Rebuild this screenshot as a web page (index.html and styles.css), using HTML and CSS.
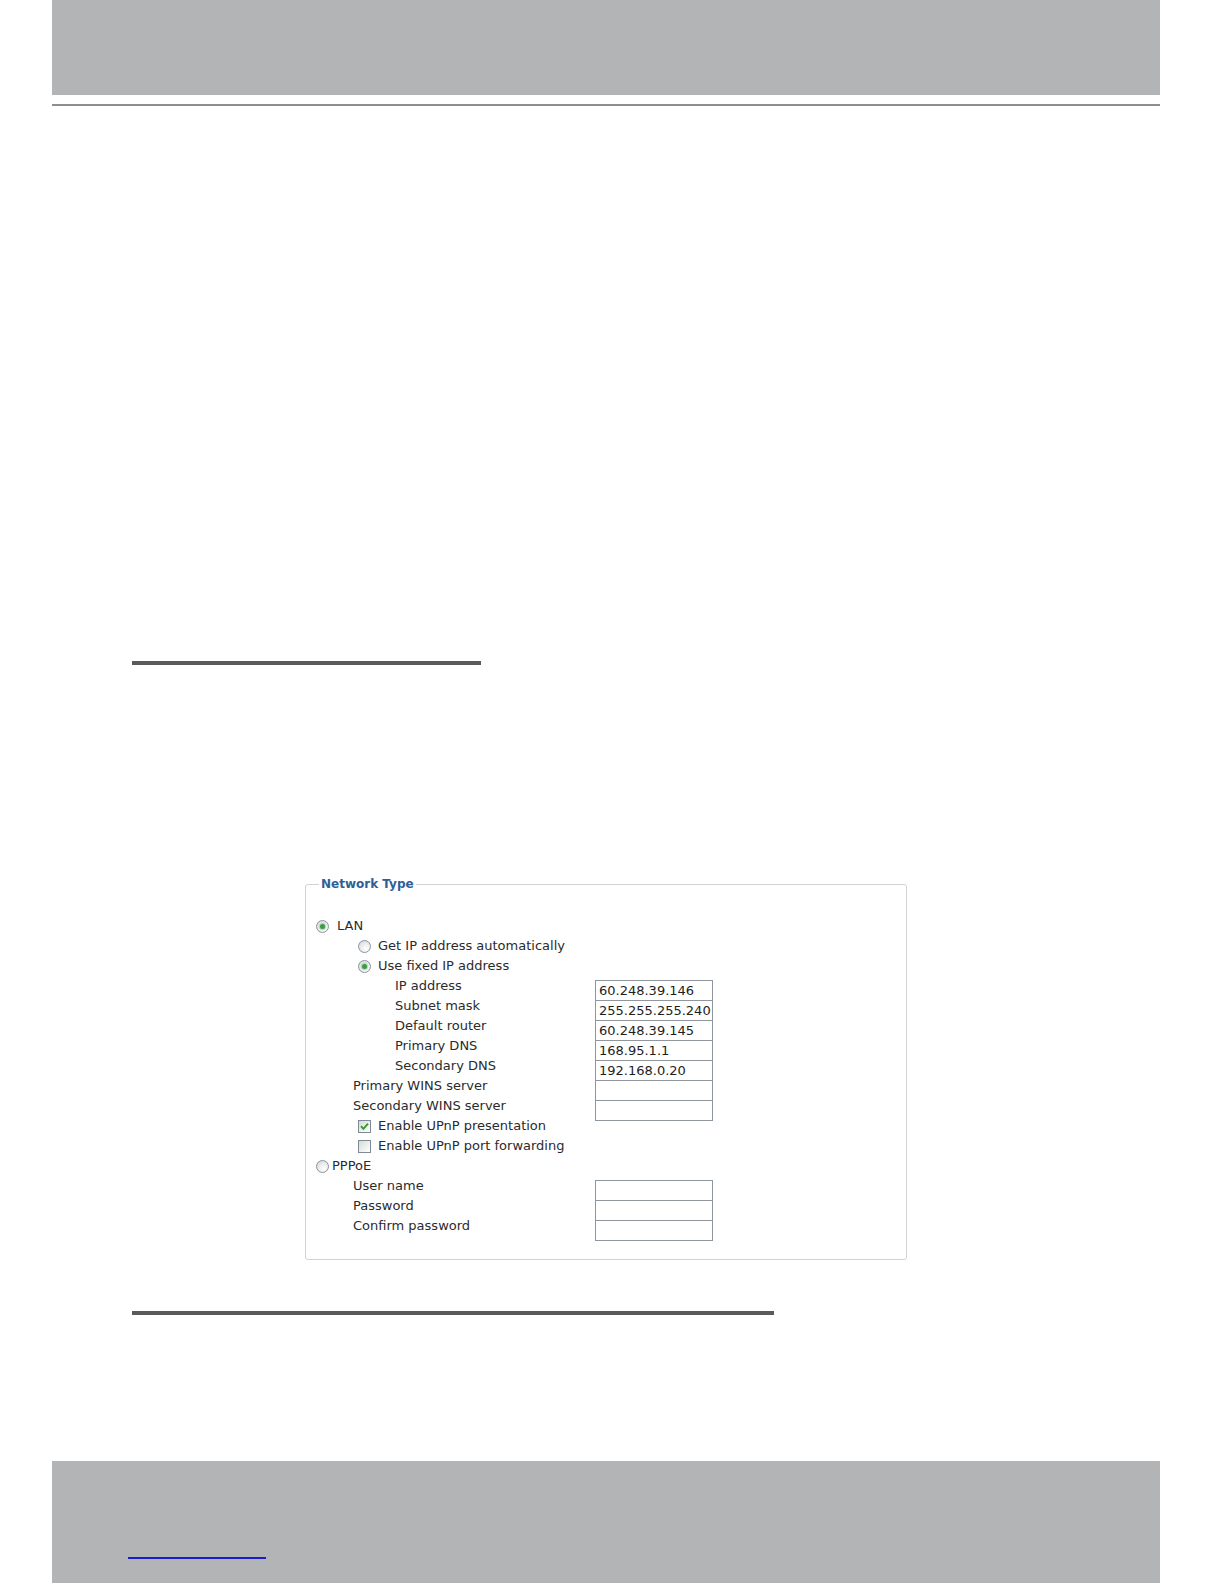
FILE: index.html
```html
<!DOCTYPE html>
<html>
<head>
<meta charset="utf-8">
<title>Network Type</title>
<link rel="stylesheet" href="styles.css">
</head>
<body>
<div class="page">
  <div class="band band-top"></div>
  <div class="thin-rule"></div>
  <div class="rule rule-short"></div>

  <fieldset class="panel">
    <legend class="panel-title">Network Type</legend>
    <div class="form">
      <div class="cell full lvl0"><span class="radio on"></span><span class="txt gap8">LAN</span></div>
      <div class="cell full lvl1b"><span class="radio"></span><span class="txt gap7">Get IP address automatically</span></div>
      <div class="cell full lvl1b"><span class="radio on"></span><span class="txt gap7">Use fixed IP address</span></div>

      <div class="cell lvl2"><span class="txt">IP address</span></div>
      <div class="field">60.248.39.146</div>
      <div class="cell lvl2"><span class="txt">Subnet mask</span></div>
      <div class="field">255.255.255.240</div>
      <div class="cell lvl2"><span class="txt">Default router</span></div>
      <div class="field">60.248.39.145</div>
      <div class="cell lvl2"><span class="txt">Primary DNS</span></div>
      <div class="field">168.95.1.1</div>
      <div class="cell lvl2"><span class="txt">Secondary DNS</span></div>
      <div class="field">192.168.0.20</div>
      <div class="cell lvl1"><span class="txt">Primary WINS server</span></div>
      <div class="field"></div>
      <div class="cell lvl1"><span class="txt">Secondary WINS server</span></div>
      <div class="field"></div>

      <div class="cell full lvl1b"><span class="check on"><svg viewBox="0 0 13 13" width="13" height="13"><path d="M3 6.2 L5.4 8.8 L10 3.6" fill="none" stroke="#2f9e2f" stroke-width="1.9"/></svg></span><span class="txt gap7">Enable UPnP presentation</span></div>
      <div class="cell full lvl1b"><span class="check"></span><span class="txt gap7">Enable UPnP port forwarding</span></div>

      <div class="cell full lvl0"><span class="radio"></span><span class="txt gap3">PPPoE</span></div>
      <div class="cell lvl1"><span class="txt">User name</span></div>
      <div class="field"></div>
      <div class="cell lvl1"><span class="txt">Password</span></div>
      <div class="field"></div>
      <div class="cell lvl1"><span class="txt">Confirm password</span></div>
      <div class="field"></div>
    </div>
  </fieldset>

  <div class="rule rule-long"></div>

  <div class="band band-bottom">
    <a class="foot-link" href="#"></a>
  </div>
</div>
</body>
</html>
```

FILE: styles.css
```css
html, body {
  margin: 0;
  padding: 0;
  background: #ffffff;
}

.page {
  width: 1224px;
  height: 1584px;
  overflow: hidden;
  font-family: "DejaVu Sans", Verdana, sans-serif;
}

.band {
  margin: 0 64px 0 52px;
  background: #b3b4b6;
}

.band-top {
  height: 95px;
}

.thin-rule {
  margin: 9px 64px 0 52px;
  height: 2px;
  background: #8e8e8e;
}

.rule {
  margin-left: 132px;
  height: 4px;
  background: #5a5a5a;
}

.rule-short {
  margin-top: 555px;
  width: 349px;
}

.rule-long {
  margin-top: 51px;
  width: 642px;
}

.panel {
  margin: 211px 0 0 305px;
  width: 602px;
  box-sizing: border-box;
  border: 1px solid #d3d3d3;
  border-radius: 3px;
  padding: 24px 10px 23px 10px;
  min-width: 0;
}

.panel-title {
  margin-left: 3px;
  padding: 0 2px;
  font-size: 12px;
  font-weight: bold;
  line-height: 16px;
  color: #2e5f96;
}

.form {
  display: grid;
  grid-template-columns: 279px 118px;
  grid-auto-rows: 20px;
  font-size: 13px;
  color: #2b2b2b;
}

.cell {
  display: flex;
  align-items: center;
  white-space: nowrap;
}

.full {
  grid-column: 1 / -1;
}

.lvl0 { padding-left: 0; }
.lvl1 { padding-left: 37px; }
.lvl1b { padding-left: 42px; }
.lvl2 { padding-left: 79px; }

.txt {
  line-height: 20px;
}

.gap8 { margin-left: 8px; }
.gap7 { margin-left: 7px; }
.gap3 { margin-left: 3px; }

.radio {
  position: relative;
  flex: none;
  width: 13px;
  height: 13px;
  box-sizing: border-box;
  border: 1px solid #8a949e;
  border-radius: 50%;
  background: radial-gradient(circle at 65% 70%, #ffffff 0%, #eceeee 45%, #cfd3d6 100%);
}

.radio.on::after {
  content: "";
  position: absolute;
  left: 3px;
  top: 3px;
  width: 5px;
  height: 5px;
  border-radius: 50%;
  background: #3f9a47;
  box-shadow: 0 0 1px 1px #a9d5ad;
}

.check {
  flex: none;
  width: 13px;
  height: 13px;
  box-sizing: border-box;
  border: 1px solid #7e8a96;
  background: linear-gradient(135deg, #d6d8d6 0%, #eef0ee 55%, #ffffff 100%);
  display: flex;
}

.check svg {
  margin: -1px;
}

.field {
  margin-top: 4px;
  margin-bottom: -5px;
  height: 21px;
  box-sizing: border-box;
  border: 1px solid #8f969d;
  background: #ffffff;
  padding-left: 3px;
  font-size: 13px;
  line-height: 19px;
  color: #1e1e1e;
  white-space: nowrap;
  overflow: hidden;
}

.band-bottom {
  margin-top: 146px;
  height: 122px;
  display: flex;
  align-items: flex-end;
}

.foot-link {
  display: block;
  margin: 0 0 24px 76px;
  width: 138px;
  height: 0;
  border-bottom: 2px solid #1c1ccf;
}
```
